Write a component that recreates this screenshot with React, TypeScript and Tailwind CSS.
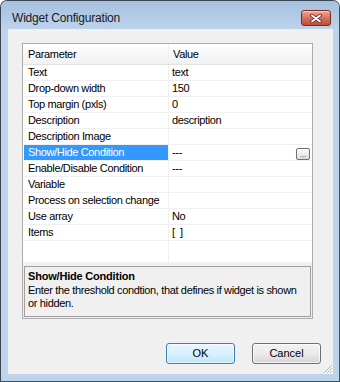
import React from 'react';

interface PropRow {
  name: string;
  value: string;
  selected?: boolean;
  hasButton?: boolean;
}

const rows: PropRow[] = [
  { name: 'Text', value: 'text' },
  { name: 'Drop-down width', value: '150' },
  { name: 'Top margin (pxls)', value: '0' },
  { name: 'Description', value: 'description' },
  { name: 'Description Image', value: '' },
  { name: 'Show/Hide Condition', value: '---', selected: true, hasButton: true },
  { name: 'Enable/Disable Condition', value: '---' },
  { name: 'Variable', value: '' },
  { name: 'Process on selection change', value: '' },
  { name: 'Use array', value: 'No' },
  { name: 'Items', value: '[  ]' },
];

const CloseGlyph = () => (
  <svg width="12" height="9" viewBox="0 0 12 9">
    <path d="M2 1.5 L10 7.5 M10 1.5 L2 7.5" stroke="#5a1a14" strokeWidth="3.4" strokeLinecap="round" />
    <path d="M2 1.5 L10 7.5 M10 1.5 L2 7.5" stroke="#ffffff" strokeWidth="2" strokeLinecap="round" />
  </svg>
);

const Grip = () => (
  <svg width="11" height="11" viewBox="0 0 11 11">
    <path d="M10 2 L2 10 M10 5 L5 10 M10 8 L8 10" stroke="#b8b8b8" strokeWidth="1" />
    <path d="M11 3 L3 11 M11 6 L6 11 M11 9 L9 11" stroke="#ffffff" strokeWidth="1" />
  </svg>
);

export default function App() {
  return (
    <div className="w-[340px] h-[382px] bg-white">
      <div className="w-[340px] h-[382px] flex flex-col rounded-t-[7px] border border-[#3a4654] border-r-[#2d5a68] border-b-[#1f5e6b] bg-[#bdd4eb] overflow-hidden font-['Liberation_Sans',Arial,sans-serif] text-[11px] text-black tracking-[-0.35px]">
        {/* title bar */}
        <div className="h-[28px] flex items-start justify-between bg-gradient-to-b from-[#a6c0de] to-[#bcd3ea]">
          <span className="ml-[11px] mt-[10px] text-[12px] leading-[14px] text-[#1a1a1a] tracking-[-0.2px]">
            Widget Configuration
          </span>
          <div className="mr-[8px] mt-[9px] w-[30px] h-[16px] rounded-[3px] border border-[#7d2a20] bg-gradient-to-b from-[#eaa99b] via-[#d4705f] to-[#c24a39] flex items-center justify-center shadow-[inset_0_1px_0_rgba(255,255,255,0.5)]">
            <CloseGlyph />
          </div>
        </div>

        {/* client area */}
        <div className="ml-[7px] w-[325px] h-[345px] bg-[#f0f0f0] flex flex-col relative">
          <div className="ml-[14px] mt-[14px] w-[291px] h-[276px] border border-[#acacac] bg-[#f0f0f0] flex flex-col">
            {/* grid */}
            <div className="h-[218px] bg-white flex flex-col">
              <div className="h-[21px] flex border-b border-[#e2e2e2] bg-gradient-to-b from-white to-[#f1f1f1]">
                <div className="w-[146px] border-r border-[#f0f0f0] pl-[5px] leading-[21px]">Parameter</div>
                <div className="flex-1 pl-[4px] leading-[21px]">Value</div>
              </div>
              {rows.map((r) => (
                <div key={r.name} className="h-[16px] flex border-b border-[#f0f0f0]">
                  <div className="w-[146px] border-r border-[#f0f0f0] flex">
                    <div
                      className={`flex-1 ml-[1px] pl-[4px] leading-[15px] whitespace-nowrap ${
                        r.selected ? 'bg-[#3399ff] text-white' : ''
                      }`}
                    >
                      {r.name}
                    </div>
                  </div>
                  <div className="flex-1 flex items-center pl-[3px] pr-[2px] leading-[15px] whitespace-pre">
                    <span className="flex-1">{r.value}</span>
                    {r.hasButton && (
                      <div className="w-[14px] h-[12px] mt-[2px] rounded-[2px] border border-[#707070] bg-gradient-to-b from-white to-[#dcdcdc] flex items-end justify-center text-[8px] leading-[8px] text-[#404080] tracking-normal">
                        ...
                      </div>
                    )}
                  </div>
                </div>
              ))}
              <div className="flex-1 flex">
                <div className="w-[146px] border-r border-[#f0f0f0]" />
                <div className="flex-1" />
              </div>
            </div>

            {/* help panel */}
            <div className="mx-[1px] mt-[4px] h-[51px] border border-[#a0a0a0] bg-[#f0f0f0] pl-[3px] pt-[3px]">
              <div className="font-bold leading-[13px] tracking-[-0.2px]">Show/Hide Condition</div>
              <div className="leading-[13px] mt-[1px] pr-[8px]">
                Enter the threshold condtion, that defines if widget is shown or hidden.
              </div>
            </div>
          </div>

          {/* buttons */}
          <div className="mt-[24px] flex justify-end gap-[17px] pr-[12px]">
            <button className="w-[69px] h-[21px] rounded-[3px] border border-[#3c7fb1] bg-gradient-to-b from-[#eaf6fd] via-[#d9f0fc] to-[#bee6fd] text-[11px] leading-[19px] tracking-normal shadow-[inset_0_0_0_1px_rgba(255,255,255,0.6)]">
              OK
            </button>
            <button className="w-[69px] h-[21px] rounded-[3px] border border-[#707070] bg-gradient-to-b from-[#f2f2f2] via-[#ebebeb] to-[#d5d5d5] text-[11px] leading-[19px] tracking-normal shadow-[inset_0_0_0_1px_rgba(255,255,255,0.7)]">
              Cancel
            </button>
          </div>

          <div className="absolute right-0 bottom-0">
            <Grip />
          </div>
        </div>
      </div>
    </div>
  );
}
